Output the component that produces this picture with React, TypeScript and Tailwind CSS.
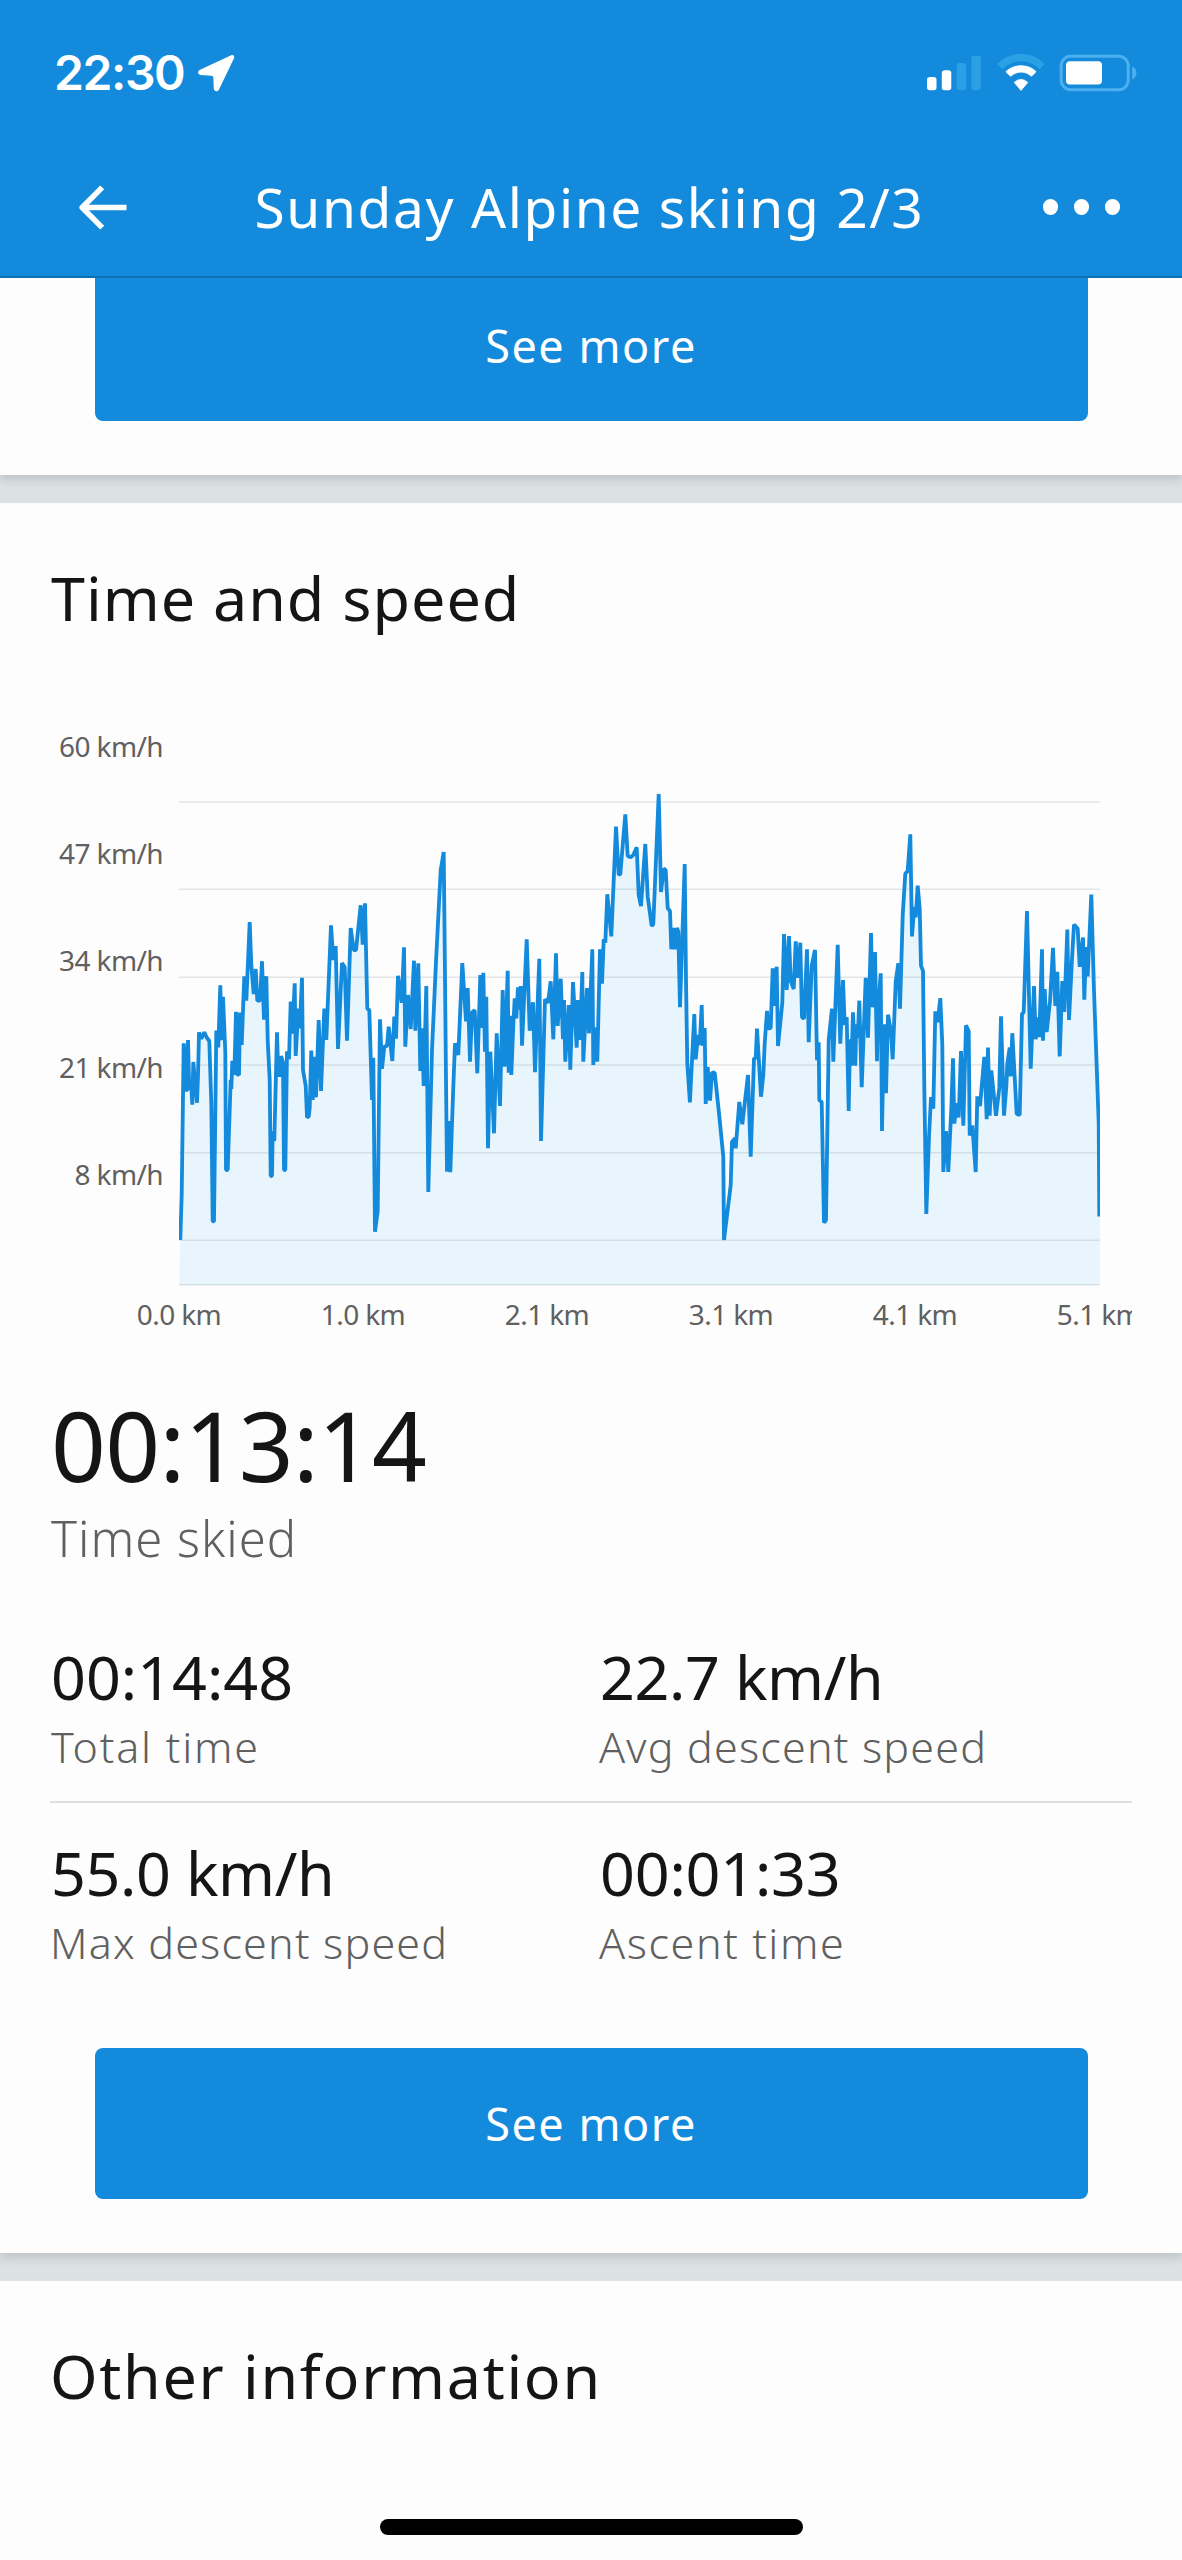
import type { ReactNode } from 'react';

/* Speed samples in chart units: x runs along the distance axis, y grows downwards. */
const SPEED_TRACE = `
180.3,1240 181.7,1194 183.7,1043.4 186.7,1091.7 188,1040 189.3,1090 191,1080 192.3,1104.7 193.3,1062 197,1102.8
198,1076 199,1032.4 201.3,1038.7 204.3,1032.4 207,1038 209.3,1041 211.3,1103.5 212.7,1221.4 214,1221.4 216.3,1030.4
218.3,1047.4 220.3,985.3 221.7,1040.3 223,996.8 225.3,1052 226,1170 227.7,1170 230.7,1079.8 231.3,1089 232.3,1060.8
234.3,1074.7 236,1011.8 237,1074 239,1075 240,1012.6 241.7,1045 244.3,976.2 246.3,1000.7 249.7,922 251.3,965.2
253.7,994 255.7,969 257.3,1000.7 260,1000.7 262,961.2 264,1019.7 266.3,976.2 267.7,1040.3 269.7,1079.8 270.7,1176
272,1176 272.7,1131.2 274.3,1141 277,1032.4 278.3,1075 280.3,1075 281,1056 283,1062.4 284,1170 285.3,1170
287,1051.4 289,1059.3 290.7,1001.5 292.3,1033.6 294.7,983.3 295.7,1056 298.3,1008.7 299.7,1028.4 302,977.8 303,1070
305.7,1085.8 307,1117.4 308.7,1116.5 309.7,1108.3 311.3,1050.6 312.7,1100 314,1056.7 316,1097.3 318.7,1020 321,1091
324.3,1008.7 326.3,1040 331,925.3 333.3,960 335.7,946 338,1049 342,963 344.7,967 347,1040.7 350.7,928
353.7,950 356,950 360.7,905.3 362.7,944.7 365,903.3 367.3,1008.7 369.3,1010 372,1100 373.3,1057.7 375,1231.7
377.7,1211 380,1019.3 382,1068.7 384.3,1046.7 387,1046 388.7,1026.7 392.3,1061 394.3,1016.7 396,1038.7 398,975.7
401.7,1002.7 404,947.3 405.3,1046.7 408,995 410.7,1029 414,960.7 415.3,1030.7 418.3,963.3 420.3,1071 422,1028.3
423.7,1086 426.3,986 428.3,1192 432,1050 436,961.7 440.7,870 443.7,852 444.7,946.7 446,1080 447,1171.7
448.3,1121 450.3,1172.3 453.3,1086.7 455,1043.3 458.3,1055 462.3,963 466,1021.3 467.7,988 470,1061.7 472,1012.7
474.7,1010 477.3,1073.3 480.3,975 482,1028 483.3,972.7 485,1051.7 486.3,996.7 488,1148.3 490.3,1051.7 494,1133.3
496.7,1033.3 500,1106 502.7,990 504.7,1066.7 507.7,970.7 508.7,1072.7 510,1015.7 511.3,1075 513.3,1025 514.7,998.3
516.3,1018.3 518,987.3 519.3,1009.3 520.7,986 522,1045.7 526.7,939.3 529.7,1030.7 533,1002.3 535,1072.3 539.3,958.7
541,1141 545,999.3 548,1002.7 550.7,981.3 553.3,1039.3 556,953.3 557.7,1026 560.7,978.7 563,1039.3 564,1000
565.3,1061.7 568.7,1005 570.3,1069.7 573,982 576.7,1047.7 578,1000 580,1040 582.3,972 583.3,1061.7 587,988
589,1033.3 592.3,949.3 593.3,1065 595.3,1027.3 597.3,1061.7 600,949.3 602,983.7 603.7,939.3 605.3,942.7 607.3,894.3
611.3,936.3 616,826.7 618.7,875 620.3,874 625.3,814.3 627.7,856 630.7,857.3 633.3,855 636.7,847.3 638.7,895
641,906 645.3,844 647.7,896.7 651.7,926 653.3,924 658.7,794 661,892 663.7,868.7 665.7,870 667.7,908.3
670,911 671.3,949.3 673,928 675,949.3 677,928 678.3,931.7 680,1007.3 684.7,864 686,980 687.3,1063.3
689.9,1102.3 694.3,1014 695.7,1059.3 698,1035 699.7,1045 701.7,1005 702.7,1045.7 704.7,1028 705.7,1104 707.7,1067
710,1100.7 712,1072.7 714.7,1072.7 719,1113.3 723.3,1156.7 724,1240 730.7,1185 732,1141.7 735,1138.3 735.7,1148.3
739.3,1102 742.3,1124.3 748,1075 750.7,1156.7 754,1058.3 755.7,1058.3 757,1028.7 761,1096.7 763.3,1075 764.7,1043.3
767,1011 768.3,1028.7 770.7,1028 772.7,968.3 774.7,1006 776.7,966.7 778,1046 782.3,1002.7 784,934 786.7,990
789,936 790.7,981 793.7,989 795.7,941.3 798,978 800.3,942.7 802,1017.3 804,1018.7 807,949.3 808.7,1042.3
811.7,965.7 815,950 817,1060.3 818.7,1042.3 819.3,1100 821.7,1102 824,1222.7 826,1220 828.7,1040 832,1008.7
833.3,1061.7 837.7,944.7 840.3,1043.7 843,980 844.7,1025 846.7,1017.3 848.7,1111 850,1039.3 851.3,1065.7 853,1012.3
855.3,1065.7 856.3,1024.3 857.7,1037.7 859.3,1000.7 861.7,1087.3 865.7,977.7 868,1037.7 871,933 872.7,1007.3 875,952
877,1061.3 878,1010 880.7,973.3 882,1131 884,1024.3 886,1093.3 888,1014.7 891,1031.8 892.7,1059.3 895.7,981.8
898.3,963.2 900,1008.6 902.7,915.7 905.3,873.6 907.7,871 910.3,834.3 912,936.4 914.3,906.8 915.7,917.5 917.7,885.7
919.7,908.6 921,965.7 923,971 924.3,1087 926.3,1214 929,1137 931,1097 933.3,1108.6 935.3,1011.4 937.7,1022
940.3,998.2 942.3,1044.3 943.3,1172 946,1131 948.3,1172 951.3,1108.6 953,1058.2 954.3,1123.6 956.7,1103.2 958.7,1117.5
961,1051 963.3,1125.7 966,1025.4 968.7,1031 969.7,1135.4 972.3,1125.4 975.7,1172 977.3,1096.4 980,1106 984.3,1056.8
986.7,1119.3 988,1047.5 989.7,1115.7 991.3,1070.4 996,1115.7 999.3,1087.9 1001,1016.4 1004,1115.7 1006.3,1087 1007.3,1064
1009.7,1047.5 1010.7,1076.4 1012.3,1033.2 1016.7,1114 1019.7,1115 1022,1014 1023.7,1012 1027,911 1030.7,1068.6 1034,986
1035.7,1039.3 1038,1017.5 1039.3,1037 1042,949.3 1043,1040.7 1044.7,989 1046.7,1032 1050,1001.4 1053,947.9 1055.3,1006
1057.3,971.8 1059.7,1056.4 1062.3,981 1064.3,1012 1067.3,929.6 1069,1020 1072,958.6 1074,924.6 1077.7,928.6 1079.7,966.8
1083,937.5 1084.3,999.6 1086,947 1087.7,976.4 1091.3,894.6 1094,990.7 1098.7,1122.9 1099.3,1216.4`;

const GRID_LINES = [802, 889.3, 977.3, 1065, 1152.7, 1240.3, 1284.7];

function SpeedChart() {
  return (
    <svg viewBox="179 790 921 500" className="mt-[97px] h-[500px] w-[921px] shrink-0">
      <polygon points={`179.3,1285 ${SPEED_TRACE} 1100,1216.4 1100,1285`} fill="#e8f5fc" />
      {GRID_LINES.map((y) => (
        <line key={y} x1="179" x2="1100" y1={y} y2={y} stroke="#9aa5ad" strokeOpacity="0.27" strokeWidth="1.6" />
      ))}
      <polyline points={SPEED_TRACE} fill="none" stroke="#138adb" strokeWidth="3.8" strokeLinejoin="bevel" />
    </svg>
  );
}

function StatusBar() {
  return (
    <div className="flex h-[145px] items-center justify-between pr-[44px] pl-[54px]">
      <div className="flex items-center gap-[13px]">
        <span className="font-['Inter'] text-[48px] leading-[60px] font-semibold tracking-[-1.4px]">22:30</span>
        <svg viewBox="0 0 38 38" className="h-[38px] w-[38px]" fill="white">
          <path d="M34.2 1.2 3 15.8C.2 17.2.6 20.7 3.5 20.9L14.6 21.8q1.6.1 1.7 1.7L16.8 34.6C17 38 20.8 38.2 22 35.4L36.9 4.4C38 2 36.4.2 34.2 1.2Z" />
        </svg>
      </div>
      <div className="flex items-center">
        <svg viewBox="0 0 56 38" className="mr-[15px] h-[38px] w-[56px]" fill="white">
          <rect x="1" y="23" width="9.5" height="13.3" rx="2.8" />
          <rect x="15.8" y="16.3" width="9.5" height="20" rx="2.8" />
          <rect x="30.6" y="9" width="9.5" height="27.3" rx="2.8" fill="#2ba0e4" />
          <rect x="45.4" y="1.7" width="9.5" height="34.6" rx="2.8" fill="#2ba0e4" />
        </svg>
        <svg viewBox="0 0 48 38" className="mr-[14px] h-[38px] w-[48px]" fill="none">
          <path d="M2.8 12.6a29.6 29.6 0 0 1 42.4 0" stroke="#2ba0e4" strokeWidth="7.4" />
          <path d="M11 20.2a18.4 18.4 0 0 1 26 0" stroke="white" strokeWidth="7.2" />
          <path d="M17.2 28.4q6.8-6 13.6 0L24 36.4Z" fill="white" stroke="white" strokeWidth="0.8" strokeLinejoin="round" />
        </svg>
        <svg viewBox="0 0 79 38" className="h-[38px] w-[79px]">
          <rect x="2.2" y="2.2" width="67" height="33.6" rx="9.5" fill="none" stroke="#4cb0ee" strokeWidth="3" />
          <rect x="7" y="7.2" width="36" height="23.4" rx="4" fill="white" />
          <path d="M73.2 12.6q4.2 1.8 4.2 6.4t-4.2 6.4Z" fill="#4cb0ee" />
        </svg>
      </div>
    </div>
  );
}

function Header() {
  return (
    <header className="h-[278px] border-b-2 border-[#0f70b4] bg-[#138adb] text-white">
      <StatusBar />
      <div className="flex h-[124px] items-center justify-between pr-[62px] pl-[78px]">
        <svg viewBox="0 0 50 48" className="h-[48px] w-[50px]" fill="none" stroke="white" strokeWidth="5.6" strokeLinejoin="round">
          <path d="M48.5 24.5H4M24.2 4.4 4.2 24.5l20 20.1" />
        </svg>
        <h1 className="ml-[8px] text-[55px] leading-[70px] tracking-[1.6px]">Sunday Alpine skiing 2/3</h1>
        <div className="flex gap-[16px]">
          <span className="h-[16px] w-[15px] rounded-full bg-white" />
          <span className="h-[16px] w-[15px] rounded-full bg-white" />
          <span className="h-[16px] w-[15px] rounded-full bg-white" />
        </div>
      </div>
    </header>
  );
}

function SeeMore({ className }: { className: string }) {
  return (
    <button
      className={`block h-[151px] w-[993px] rounded-[8px] bg-[#138adb] text-[45px] leading-[60px] tracking-[1.5px] text-white ${className}`}
    >
      See more
    </button>
  );
}

function Divider() {
  return (
    <div className="h-[28px] overflow-hidden bg-[#dce1e4]">
      <div className="-mt-[20px] h-[20px] shadow-[0_5px_9px_0px_rgba(110,110,110,0.24)]" />
    </div>
  );
}

function Stat({ value, label, valueClass, labelClass }: { value: string; label: string; valueClass: string; labelClass: string }) {
  return (
    <div>
      <p className={`text-[61px] leading-[82px] text-[#151515] ${valueClass}`}>{value}</p>
      <p className={`-mt-[1px] text-[43px] leading-[60px] font-light text-[#606060] ${labelClass}`}>{label}</p>
    </div>
  );
}

function StatRow({ children, className }: { children: ReactNode; className: string }) {
  return <div className={`mx-[50px] grid grid-cols-[549px_1fr] ${className}`}>{children}</div>;
}

const SPEEDS = ['60 km/h', '47 km/h', '34 km/h', '21 km/h', '8 km/h'];
const DISTANCES = ['0.0 km', '1.0 km', '2.1 km', '3.1 km', '4.1 km', '5.1 km'];

export default function App() {
  return (
    <div className="flex h-[2560px] w-[1182px] flex-col overflow-hidden bg-[#fdfdfd] font-['Noto_Sans',sans-serif]">
      <Header />
      <section className="h-[197px] overflow-hidden">
        <SeeMore className="-mt-[8px] ml-[94.5px]" />
      </section>
      <Divider />

      <section className="h-[1750px]">
        <h2 className="ml-[51px] pt-[55px] text-[61px] leading-[80px] tracking-[1px] text-[#151515]">Time and speed</h2>
        <div className="mt-[55px] flex h-[600px] gap-[16px]">
          <div className="w-[163px] text-right text-[28px] tracking-[-0.6px] text-[#606060]">
            {SPEEDS.map((speed) => (
              <p key={speed} className="h-[107px] leading-[107px]">
                {speed}
              </p>
            ))}
          </div>
          <SpeedChart />
        </div>
        <div className="mr-[50px] flex overflow-hidden pt-[1px] pl-[87px]">
          {DISTANCES.map((distance) => (
            <p key={distance} className="w-[184px] shrink-0 text-center text-[28px] leading-[40px] tracking-[-0.6px] text-[#606060]">
              {distance}
            </p>
          ))}
        </div>

        <p className="mt-[56px] ml-[51px] text-[96px] leading-[110px] tracking-[-0.7px] text-[#151515]">00:13:14</p>
        <p className="mt-[8px] ml-[51px] text-[49px] leading-[60px] font-light tracking-[1px] text-[#606060]">Time skied</p>

        <StatRow className="mt-[68px]">
          <Stat value="00:14:48" label="Total time" valueClass="pl-[1px]" labelClass="pl-[1px] tracking-[1.8px]" />
          <Stat value="22.7 km/h" label="Avg descent speed" valueClass="pl-[1px] tracking-[-0.4px]" labelClass="tracking-[1.2px]" />
        </StatRow>
        <div className="mx-[50px] mt-[24px] h-[2px] bg-[#dfdfdf]" />
        <StatRow className="mt-[29px]">
          <Stat value="55.0 km/h" label="Max descent speed" valueClass="pl-[1px] tracking-[-0.4px]" labelClass="tracking-[1.2px]" />
          <Stat value="00:01:33" label="Ascent time" valueClass="pl-[1px] tracking-[-0.2px]" labelClass="tracking-[1.6px]" />
        </StatRow>
        <SeeMore className="mt-[75px] ml-[94.5px]" />
      </section>
      <Divider />

      <section className="flex grow flex-col justify-between pb-[25px]">
        <h2 className="ml-[50px] pt-[55px] text-[61px] leading-[80px] tracking-[1.7px] text-[#151515]">Other information</h2>
        <div className="mx-auto h-[16px] w-[423px] rounded-full bg-black" />
      </section>
    </div>
  );
}
